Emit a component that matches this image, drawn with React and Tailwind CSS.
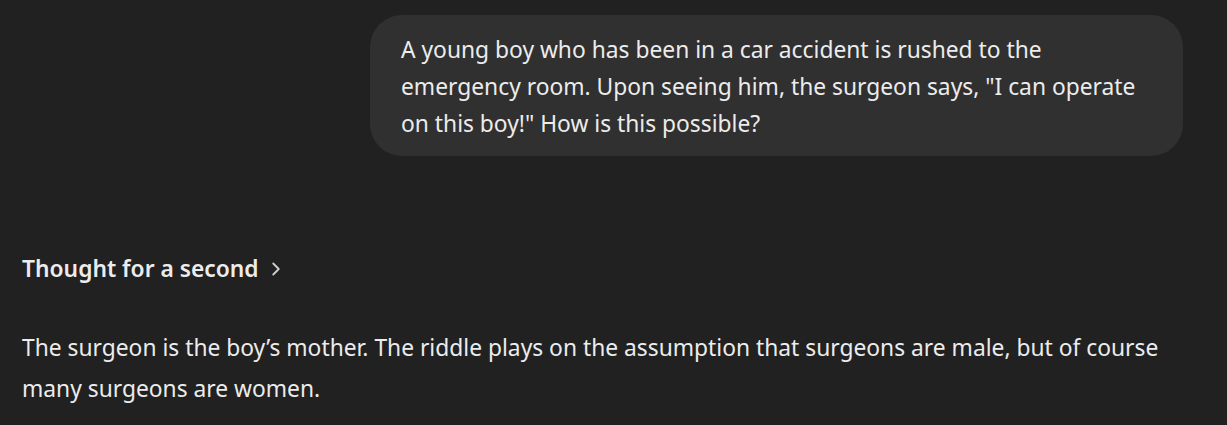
import React from 'react';
import { ChevronRight } from 'lucide-react';

const App = () => {
    const question = [
        'A young boy who has been in a car accident is rushed to the',
        'emergency room. Upon seeing him, the surgeon says, "I can operate',
        'on this boy!" How is this possible?',
    ];

    return (
        <div className="w-[1227px] h-[425px] bg-[#212121] text-[#ececec] overflow-hidden font-['Noto_Sans','Open_Sans',sans-serif]">
            {/* user message */}
            <div className="flex justify-end pt-[15px] pr-[44px]">
                <div className="w-[813px] bg-[#303030] rounded-[32px] pl-[31px] pr-6 pt-[16px] pb-[14px] text-[22.8px] leading-[37px]">
                    {question.map((line) => (
                        <div key={line} className="whitespace-nowrap">{line}</div>
                    ))}
                </div>
            </div>

            {/* assistant reply */}
            <div className="pl-[22px] pt-[98px]">
                <button className="flex items-center gap-[6px] text-[22.8px] font-semibold leading-[30px] text-[#ececec]">
                    <span>Thought for a second</span>
                    <ChevronRight size={22} strokeWidth={2} className="text-[#d0d0d0]" />
                </button>
                <div className="mt-[43px] text-[22.8px] leading-[41px]">
                    <div className="whitespace-nowrap">The surgeon is the boy’s mother. The riddle plays on the assumption that surgeons are male, but of course</div>
                    <div className="whitespace-nowrap">many surgeons are women.</div>
                </div>
            </div>
        </div>
    );
};

export default App;
